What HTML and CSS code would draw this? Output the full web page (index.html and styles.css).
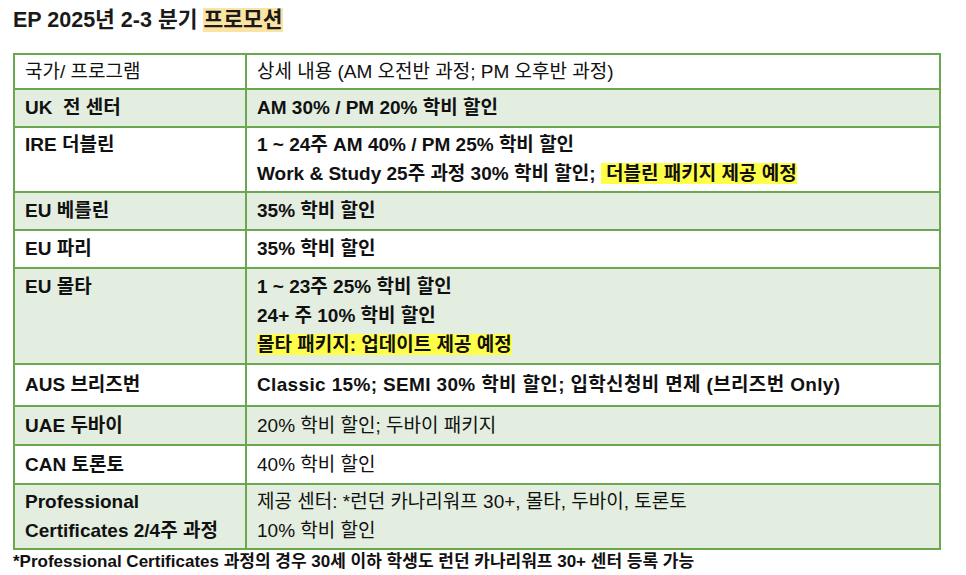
FILE: index.html
```html
<!DOCTYPE html>
<html lang="ko">
<head>
<meta charset="utf-8">
<link rel="stylesheet" href="styles.css">
</head>
<body>
<h1 class="title">EP 2025년 2-3 분기 <span class="title-mark">프로모션</span></h1>
<table class="promo">
  <colgroup><col class="c1"><col class="c2"></colgroup>
  <tr class="head">
    <td>국가/ 프로그램</td>
    <td>상세 내용 (AM 오전반 과정; PM 오후반 과정)</td>
  </tr>
  <tr class="green">
    <td class="b">UK &nbsp;전 센터</td>
    <td class="b">AM 30% / PM 20% 학비 할인</td>
  </tr>
  <tr class="multi">
    <td class="b">IRE 더블린</td>
    <td class="b">1 ~ 24주 AM 40% / PM 25% 학비 할인<br>Work &amp; Study 25주 과정 30% 학비 할인; <span class="mark">&nbsp;더블린 패키지 제공 예정</span></td>
  </tr>
  <tr class="green">
    <td class="b">EU 베를린</td>
    <td class="b">35% 학비 할인</td>
  </tr>
  <tr>
    <td class="b">EU 파리</td>
    <td class="b">35% 학비 할인</td>
  </tr>
  <tr class="green">
    <td class="b">EU 몰타</td>
    <td class="b">1 ~ 23주 25% 학비 할인<br>24+ 주 10% 학비 할인<br><span class="mark">몰타 패키지: 업데이트 제공 예정</span></td>
  </tr>
  <tr class="tall">
    <td class="b">AUS 브리즈번</td>
    <td class="b wide">Classic 15%; SEMI 30% 학비 할인; 입학신청비 면제 (브리즈번 Only)</td>
  </tr>
  <tr class="green mid">
    <td class="b">UAE 두바이</td>
    <td>20% 학비 할인; 두바이 패키지</td>
  </tr>
  <tr class="mid">
    <td class="b">CAN 토론토</td>
    <td>40% 학비 할인</td>
  </tr>
  <tr class="green multi">
    <td class="b">Professional<br>Certificates 2/4주 과정</td>
    <td>제공 센터: *런던 카나리워프 30+, 몰타, 두바이, 토론토<br>10% 학비 할인</td>
  </tr>
</table>
<p class="note">*Professional Certificates 과정의 경우 30세 이하 학생도 런던 카나리워프 30+ 센터 등록 가능</p>
</body>
</html>
```

FILE: styles.css
```css
html, body {
  margin: 0;
  padding: 0;
  background: #ffffff;
}
body {
  font-family: "Liberation Sans", "Noto Sans CJK KR", sans-serif;
  color: #111111;
  padding: 0 0 0 13px;
}
.title {
  margin: 0;
  padding-top: 8px;
  font-size: 21.5px;
  line-height: 25px;
  font-weight: bold;
  color: #1a1a1a;
}
.title-mark {
  background: #fbe3a3;
}
.promo {
  margin-top: 20px;
  width: 928px;
  border-collapse: collapse;
  font-size: 19px;
  line-height: 29px;
}
.promo .c1 { width: 232px; }
.promo td {
  border: 2px solid #6aa84f;
  padding: 3px 10px 4px 10px;
  vertical-align: top;
  white-space: nowrap;
}
.promo .head td {
  padding-top: 2px;
  padding-bottom: 2px;
}
.promo .multi td {
  padding-top: 2px;
  padding-bottom: 3px;
}
.promo .green td {
  background: #e3eee0;
}
.promo .tall td {
  padding-top: 5px;
  padding-bottom: 6px;
}
.promo .mid td {
  padding-top: 4px;
  padding-bottom: 4px;
}
.b {
  font-weight: bold;
}
.wide {
  letter-spacing: 0.35px;
}
.mark {
  background: #ffff4a;
}
.note {
  margin: 2px 0 0 0;
  font-size: 17px;
  line-height: 20px;
  font-weight: bold;
}
```
